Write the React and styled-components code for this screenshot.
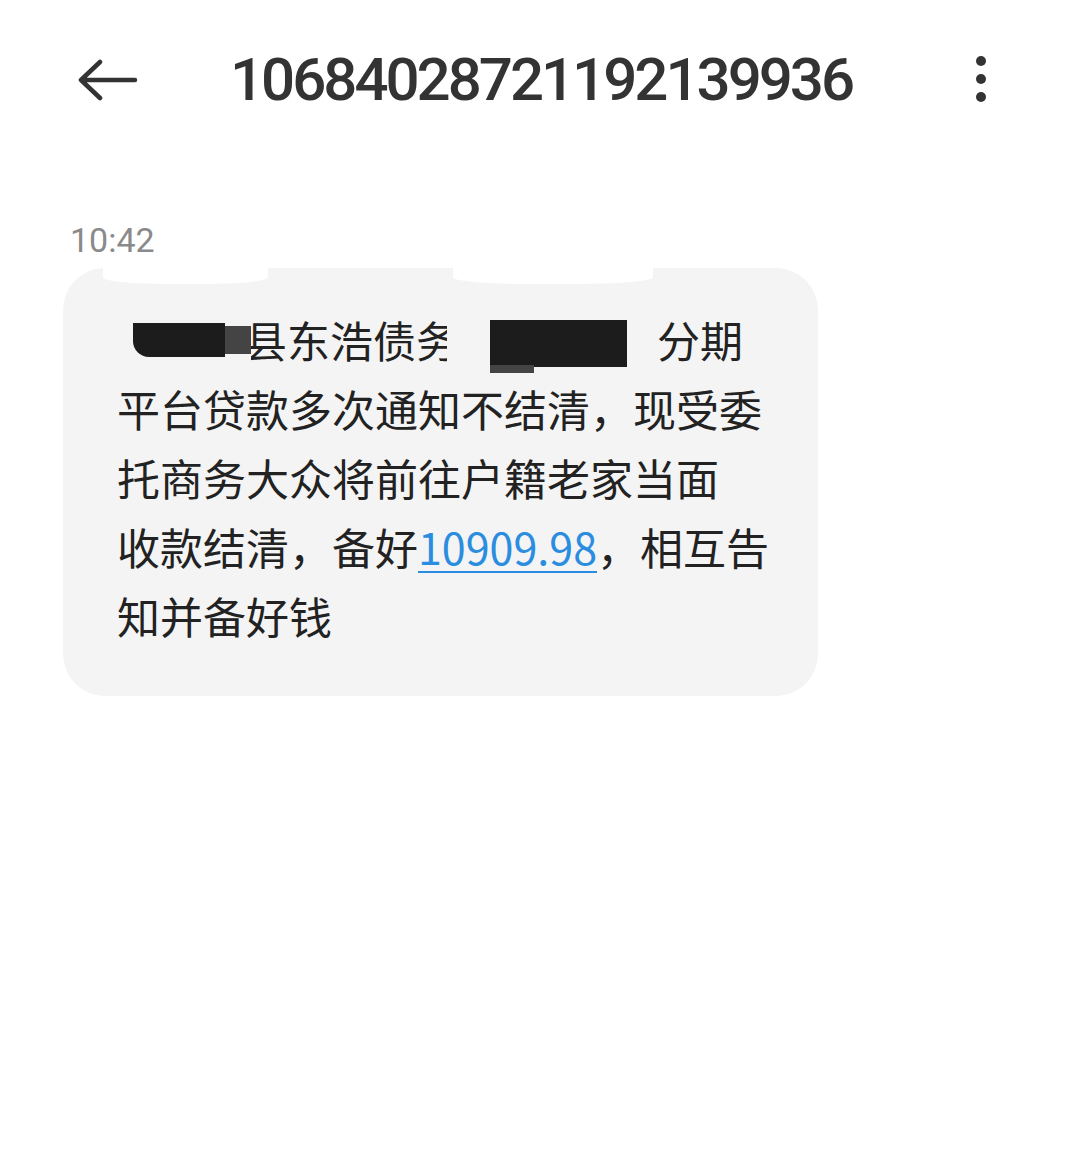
import React from 'react';
import styled, { createGlobalStyle } from 'styled-components';

const GlobalStyle = createGlobalStyle`
  html, body {
    margin: 0;
    padding: 0;
    background: #ffffff;
  }
  body {
    font-family: "Noto Sans CJK SC", "Noto Sans", sans-serif;
  }
`;

const lines = [
  '平台贷款多次通知不结清，现受委',
  '托商务大众将前往户籍老家当面',
];

const Page = () => {
  return (
    <Wrapper>
      <GlobalStyle />
      <Header>
        <IconButton aria-label="back">
          <svg width="60" height="44" viewBox="0 0 60 44">
            <path d="M57 22 H4 M22 4 L3 22 L22 40" fill="none" stroke="#333" strokeWidth="4.5" strokeLinecap="round" strokeLinejoin="round" />
          </svg>
        </IconButton>
        <Title>10684028721192139936</Title>
        <IconButton aria-label="more" $push>
          <svg width="14" height="50" viewBox="0 0 14 50">
            <circle cx="7" cy="6" r="5" fill="#333" />
            <circle cx="7" cy="24" r="5" fill="#333" />
            <circle cx="7" cy="42" r="5" fill="#333" />
          </svg>
        </IconButton>
      </Header>
      <Thread>
        <Time>10:42</Time>
        <Bubble>
          <Smudge $left={40} $width={165} />
          <Smudge $left={390} $width={200} />
          <FirstLine>
            <Redact $w={92} $h={34} $round />
            <Redact $w={26} $h={28} $shade="#444" />
            <Clip>县东浩债务</Clip>
            <Redact $w={137} $h={47} $gap={43} $top={8}>
              <Tab />
            </Redact>
            <Text $gap={30}>分期</Text>
          </FirstLine>
          {lines.map((l) => (
            <Line key={l}>{l}</Line>
          ))}
          <Line>
            收款结清，备好<Amount>10909.98</Amount>，相互告
          </Line>
          <Line>知并备好钱</Line>
        </Bubble>
      </Thread>
    </Wrapper>
  );
};

export default function App() {
  return <Page />;
}

const Wrapper = styled.div`
  width: 1080px;
  min-height: 1151px;
  background: #fff;
`;

const Header = styled.div`
  height: 160px;
  display: flex;
  align-items: center;
  padding: 0 92px 0 78px;
  box-sizing: border-box;
`;

const IconButton = styled.div`
  display: flex;
  align-items: center;
  margin-left: ${(p) => (p.$push ? 'auto' : '0')};
`;

const Title = styled.h1`
  margin: 0 0 0 92px;
  font-family: Roboto, "Liberation Sans", sans-serif;
  font-weight: 500;
  font-size: 60px;
  letter-spacing: -3px;
  color: #333;
  line-height: 1;
  white-space: nowrap;
`;

const Thread = styled.div`
  padding: 60px 0 0 63px;
`;

const Time = styled.div`
  margin-left: 7px;
  font-family: Roboto, "Liberation Sans", sans-serif;
  font-size: 34px;
  line-height: 40px;
  color: #8a8a8a;
`;

const Bubble = styled.div`
  position: relative;
  margin-top: 8px;
  width: 755px;
  box-sizing: border-box;
  padding: 37px 0 46px 54px;
  background: #f4f4f4;
  border-radius: 42px;
  font-size: 43px;
  line-height: 69px;
  color: #222;
`;

const Smudge = styled.div`
  position: absolute;
  top: 0;
  left: ${(p) => p.$left}px;
  width: ${(p) => p.$width}px;
  height: 16px;
  background: #fff;
  border-radius: 0 0 40% 40%;
`;

const Line = styled.div`
  white-space: nowrap;
  height: 69px;
`;

const FirstLine = styled(Line)`
  display: flex;
  align-items: center;
`;

const Redact = styled.span`
  position: relative;
  display: inline-block;
  flex: none;
  width: ${(p) => p.$w}px;
  height: ${(p) => p.$h}px;
  margin-left: ${(p) => p.$gap ?? 0}px;
  margin-top: ${(p) => p.$top ?? 0}px;
  background: ${(p) => p.$shade || '#1c1c1c'};
  border-radius: ${(p) => (p.$round ? '0 0 0 16px' : '0')};
  &:first-child {
    margin-left: 16px;
  }
`;

const Tab = styled.span`
  position: absolute;
  left: 0;
  bottom: -6px;
  width: 44px;
  height: 8px;
  background: #444;
`;

const Clip = styled.span`
  display: inline-block;
  flex: none;
  width: 196px;
  overflow: hidden;
  text-indent: -7px;
`;

const Text = styled.span`
  margin-left: ${(p) => p.$gap}px;
`;

const Amount = styled.span`
  color: #2b8de0;
  text-decoration: underline;
  text-decoration-thickness: 2px;
  text-underline-offset: 6px;
`;
